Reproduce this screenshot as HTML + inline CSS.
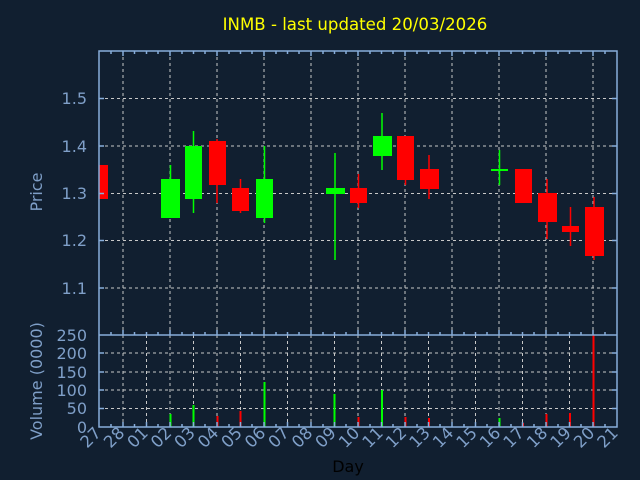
<!DOCTYPE html>
<html><head><meta charset="utf-8"><style>
html,body{margin:0;padding:0;background:#111f30;}
svg{display:block;font-family:"DejaVu Sans","Liberation Sans",sans-serif;}
</style></head><body>
<svg width="640" height="480" viewBox="0 0 640 480" xmlns="http://www.w3.org/2000/svg">
<rect width="640" height="480" fill="#111f30"/>
<text x="355" y="30" fill="#ffff00" font-size="16.6" text-anchor="middle">INMB - last updated 20/03/2026</text>
<!-- grids -->
<g stroke="#c8c8c8" stroke-width="1" stroke-dasharray="3,3" fill="none">
<path d="M99 98.5H617M99 146H617M99 193.5H617M99 240.5H617M99 288H617"/>
<path d="M123 51V335M170 51V335M217 51V335M264 51V335M311 51V335M358 51V335M405 51V335M452 51V335M499 51V335M546 51V335M593 51V335"/>
<path d="M99 408.5H617M99 390H617M99 372H617M99 353H617"/>
<path d="M123 335V427M146.5 335V427M170 335V427M193.5 335V427M217 335V427M240.5 335V427M264 335V427M287.5 335V427M311 335V427M334.5 335V427M358 335V427M381.5 335V427M405 335V427M428.5 335V427M452 335V427M475.5 335V427M499 335V427M522.5 335V427M546 335V427M569.5 335V427M593 335V427"/>
</g>
<!-- candles -->
<g stroke-width="1.5">
<rect x="99" y="165" width="9" height="34" fill="#ff0000"/>
<line x1="170.5" y1="165" x2="170.5" y2="218" stroke="#00ff00"/><rect x="161" y="179" width="19" height="39" fill="#00ff00"/>
<line x1="193.5" y1="131" x2="193.5" y2="213" stroke="#00ff00"/><rect x="185" y="146" width="17" height="53" fill="#00ff00"/>
<line x1="217" y1="139" x2="217" y2="203" stroke="#ff0000"/><rect x="209" y="141" width="17" height="44" fill="#ff0000"/>
<line x1="240.5" y1="179" x2="240.5" y2="213" stroke="#ff0000"/><rect x="232" y="188" width="17" height="23" fill="#ff0000"/>
<line x1="264.5" y1="146" x2="264.5" y2="223" stroke="#00ff00"/><rect x="256" y="179" width="17" height="39" fill="#00ff00"/>
<line x1="335" y1="153" x2="335" y2="260" stroke="#00ff00"/><rect x="326" y="188" width="19" height="6" fill="#00ff00"/>
<line x1="358.5" y1="174" x2="358.5" y2="208" stroke="#ff0000"/><rect x="350" y="188" width="17" height="15" fill="#ff0000"/>
<line x1="382" y1="113" x2="382" y2="170" stroke="#00ff00"/><rect x="373" y="136" width="19" height="20" fill="#00ff00"/>
<line x1="405.5" y1="136" x2="405.5" y2="185" stroke="#ff0000"/><rect x="397" y="136" width="17" height="44" fill="#ff0000"/>
<line x1="429" y1="155" x2="429" y2="199" stroke="#ff0000"/><rect x="420" y="169" width="19" height="20" fill="#ff0000"/>
<line x1="499.5" y1="150" x2="499.5" y2="185" stroke="#00ff00"/><rect x="491" y="169" width="17" height="2" fill="#00ff00"/>
<rect x="515" y="169" width="17" height="34" fill="#ff0000"/>
<line x1="547" y1="179" x2="547" y2="239" stroke="#ff0000"/><rect x="538" y="193" width="19" height="29" fill="#ff0000"/>
<line x1="570.5" y1="207" x2="570.5" y2="246" stroke="#ff0000"/><rect x="562" y="226" width="17" height="6" fill="#ff0000"/>
<line x1="594" y1="197" x2="594" y2="260" stroke="#ff0000"/><rect x="585" y="207" width="19" height="49" fill="#ff0000"/>
</g>
<!-- volume bars -->
<g stroke-width="2">
<line x1="170.5" y1="414" x2="170.5" y2="427" stroke="#00ff00"/>
<line x1="193.5" y1="405" x2="193.5" y2="427" stroke="#00ff00"/>
<line x1="217.5" y1="416" x2="217.5" y2="427" stroke="#ff0000"/>
<line x1="240.5" y1="411" x2="240.5" y2="427" stroke="#ff0000"/>
<line x1="264.5" y1="382" x2="264.5" y2="427" stroke="#00ff00"/>
<line x1="334.5" y1="394" x2="334.5" y2="427" stroke="#00ff00"/>
<line x1="358.5" y1="417" x2="358.5" y2="427" stroke="#ff0000"/>
<line x1="382" y1="390" x2="382" y2="427" stroke="#00ff00"/>
<line x1="405.5" y1="417" x2="405.5" y2="427" stroke="#ff0000"/>
<line x1="429" y1="418" x2="429" y2="427" stroke="#ff0000"/>
<line x1="499.5" y1="418" x2="499.5" y2="427" stroke="#00ff00"/>
<line x1="523" y1="423" x2="523" y2="427" stroke="#ff0000"/>
<line x1="546.5" y1="414" x2="546.5" y2="427" stroke="#ff0000"/>
<line x1="570" y1="413" x2="570" y2="427" stroke="#ff0000"/>
<line x1="593.5" y1="335" x2="593.5" y2="427" stroke="#ff0000"/>
</g>
<!-- axes -->
<g stroke="#88aedb" stroke-width="1.5" fill="none">
<path d="M99 51H617V427H99Z"/>
<path d="M99 335H617"/>
<path d="M99 98.5H104M99 146H104M99 193.5H104M99 240.5H104M99 288H104M612 98.5H617M612 146H617M612 193.5H617M612 240.5H617M612 288H617"/>
<path d="M612 408.5H617M612 390H617M612 372H617M612 353H617M99 408.5H104M99 390H104M99 372H104M99 353H104"/>
<path d="M111 51v3M123 51v5M134.5 51v3M146.5 51v3M158 51v3M170 51v5M182 51v3M193.5 51v3M205 51v3M217 51v5M229 51v3M240.5 51v3M252 51v3M264 51v5M276 51v3M287.5 51v3M299 51v3M311 51v5M323 51v3M334.5 51v3M346 51v3M358 51v5M370 51v3M381.5 51v3M393 51v3M405 51v5M417 51v3M428.5 51v3M440 51v3M452 51v5M464 51v3M475.5 51v3M487 51v3M499 51v5M511 51v3M522.5 51v3M534 51v3M546 51v5M558 51v3M569.5 51v3M581 51v3M593 51v5M605 51v3"/>
<path d="M111 335v-3M123 335v-5M134.5 335v-3M146.5 335v-3M158 335v-3M170 335v-5M182 335v-3M193.5 335v-3M205 335v-3M217 335v-5M229 335v-3M240.5 335v-3M252 335v-3M264 335v-5M276 335v-3M287.5 335v-3M299 335v-3M311 335v-5M323 335v-3M334.5 335v-3M346 335v-3M358 335v-5M370 335v-3M381.5 335v-3M393 335v-3M405 335v-5M417 335v-3M428.5 335v-3M440 335v-3M452 335v-5M464 335v-3M475.5 335v-3M487 335v-3M499 335v-5M511 335v-3M522.5 335v-3M534 335v-3M546 335v-5M558 335v-3M569.5 335v-3M581 335v-3M593 335v-5M605 335v-3"/>
<path d="M111 427v-3M123 427v-5M134.5 427v-3M146.5 427v-5M158 427v-3M170 427v-5M182 427v-3M193.5 427v-5M205 427v-3M217 427v-5M229 427v-3M240.5 427v-5M252 427v-3M264 427v-5M276 427v-3M287.5 427v-5M299 427v-3M311 427v-5M323 427v-3M334.5 427v-5M346 427v-3M358 427v-5M370 427v-3M381.5 427v-5M393 427v-3M405 427v-5M417 427v-3M428.5 427v-5M440 427v-3M452 427v-5M464 427v-3M475.5 427v-5M487 427v-3M499 427v-5M511 427v-3M522.5 427v-5M534 427v-3M546 427v-5M558 427v-3M569.5 427v-5M581 427v-3M593 427v-5M605 427v-3"/>
</g>
<!-- labels -->
<g fill="#7f9fc8" font-size="16" text-anchor="end">
<text x="87" y="104">1.5</text>
<text x="87" y="152">1.4</text>
<text x="87" y="199">1.3</text>
<text x="87" y="246">1.2</text>
<text x="87" y="294">1.1</text>
<text x="87" y="341">250</text>
<text x="87" y="359">200</text>
<text x="87" y="378">150</text>
<text x="87" y="396">100</text>
<text x="87" y="414">50</text>
<text x="87" y="433">0</text>
</g>
<g fill="#7f9fc8" font-size="16" text-anchor="middle">
<text transform="translate(42,192) rotate(-90)">Price</text>
<text transform="translate(42,381) rotate(-90)">Volume (0000)</text>
</g>
<g fill="#7f9fc8" font-size="16.5" text-anchor="end">
<text transform="translate(102,434) rotate(-45)">27</text>
<text transform="translate(125.5,434) rotate(-45)">28</text>
<text transform="translate(149,434) rotate(-45)">01</text>
<text transform="translate(172.5,434) rotate(-45)">02</text>
<text transform="translate(196,434) rotate(-45)">03</text>
<text transform="translate(219.5,434) rotate(-45)">04</text>
<text transform="translate(243,434) rotate(-45)">05</text>
<text transform="translate(266.5,434) rotate(-45)">06</text>
<text transform="translate(290,434) rotate(-45)">07</text>
<text transform="translate(313.5,434) rotate(-45)">08</text>
<text transform="translate(337,434) rotate(-45)">09</text>
<text transform="translate(360.5,434) rotate(-45)">10</text>
<text transform="translate(384,434) rotate(-45)">11</text>
<text transform="translate(407.5,434) rotate(-45)">12</text>
<text transform="translate(431,434) rotate(-45)">13</text>
<text transform="translate(454.5,434) rotate(-45)">14</text>
<text transform="translate(478,434) rotate(-45)">15</text>
<text transform="translate(501.5,434) rotate(-45)">16</text>
<text transform="translate(525,434) rotate(-45)">17</text>
<text transform="translate(548.5,434) rotate(-45)">18</text>
<text transform="translate(572,434) rotate(-45)">19</text>
<text transform="translate(595.5,434) rotate(-45)">20</text>
<text transform="translate(619,434) rotate(-45)">21</text>
</g>
<text x="348" y="472" fill="#000000" font-size="16" text-anchor="middle">Day</text>
</svg>
</body></html>
